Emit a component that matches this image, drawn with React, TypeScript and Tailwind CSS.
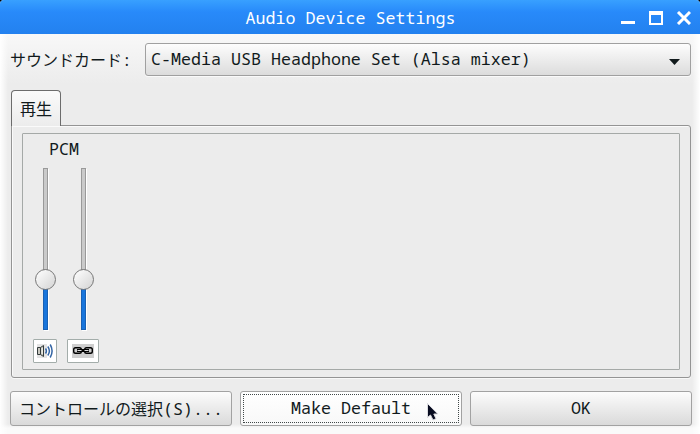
import type { ReactNode } from "react";

function TitleBar() {
  return (
    <header className="relative flex h-[34px] shrink-0 items-center justify-center bg-linear-to-b from-[#38a0ff] via-[#288afa] via-35% to-[#2381ef] pl-px text-white">
      <h1 className="mt-0.5 leading-5">Audio Device Settings</h1>
      <svg
        className="absolute top-[11px] right-[9px]"
        width="70"
        height="14"
        viewBox="0 0 70 14"
        fill="none"
        stroke="white"
      >
        <path d="M0 11.5h14" strokeWidth="3" />
        <path d="M29 1v12M41 1v12M28 13h14" strokeWidth="2" />
        <path d="M28 2h14" strokeWidth="4" />
        <path d="M57 1l12 12M69 1L57 13" strokeWidth="3" />
      </svg>
    </header>
  );
}

function SoundCardSelect() {
  return (
    <button className="flex h-[33px] w-[546px] items-center justify-between rounded-[3px] border border-[#a0a0a0] bg-linear-to-b from-[#fdfdfd] to-[#dcdcdc] pr-[10px] pl-[5px] shadow-[0_1px_0_#fafafa]">
      <span className="pb-0.5 whitespace-pre">C-Media USB Headphone Set (Alsa mixer)</span>
      <svg className="mt-1" width="11" height="6" viewBox="0 0 11 6">
        <path d="M0 0h11L5.5 6z" fill="#111a1c" />
      </svg>
    </button>
  );
}

function VolumeSlider() {
  return (
    <div className="relative flex h-[162px] w-5 justify-center">
      <div className="flex h-full w-[5px] flex-col shadow-[1px_1px_0_#fff]">
        <div className="h-[111px] border border-b-0 border-[#999] bg-[#cacaca]" />
        <div className="flex-1 border border-t-0 border-[#1860b4] bg-[#1875dc]" />
      </div>
      <div className="absolute top-[101px] left-0 size-[21px] rounded-full border border-[#777] bg-linear-to-br from-white to-[#d4d4d4]" />
    </div>
  );
}

function SpeakerIcon() {
  return (
    <svg width="16" height="14" viewBox="0 0 16 14" fill="none">
      <path d="M0 0h10v14H0z" fill="#e4e4e4" />
      <path d="M.5 3.5h3l3-2v11l-3-2h-3z" fill="#c8c8c0" stroke="#343c3c" />
      <path d="M3.5 3.5v7" stroke="#343c3c" />
      <path d="M5.2 4v6" stroke="#f8f8f0" />
      <path
        d="M8.5 4.5q1.8 2.5 0 5M10.8 2.5q3.2 4.5 0 9M13.2.5q3.8 6.5 0 13"
        stroke="#3465a4"
        strokeWidth="1.5"
      />
    </svg>
  );
}

function LinkIcon() {
  return (
    <svg width="22" height="14" viewBox="0 0 22 14" fill="none">
      <path d="M0 0h22v14H0z" fill="#cecece" />
      <rect x="1.7" y="3.7" width="7.6" height="5.6" rx="1.8" stroke="black" strokeWidth="1.4" />
      <rect x="12.7" y="3.7" width="7.6" height="5.6" rx="1.8" stroke="black" strokeWidth="1.4" />
      <path d="M5 6.5h12" stroke="black" strokeWidth="3" />
      <path d="M5.5 6.5h4M12.5 6.5h4" stroke="#ddd" />
    </svg>
  );
}

function ToggleButton({ width, children }: { width: string; children: ReactNode }) {
  return (
    <button
      className={`flex h-6 items-center justify-center rounded-[1px] border border-[#a3adaa] bg-white ${width}`}
    >
      {children}
    </button>
  );
}

function PlaybackTab() {
  return (
    <section>
      <div className="relative z-10 -mb-px flex h-9 w-[50px] items-center justify-center rounded-t-[4px] border border-b-0 border-[#6c6c6c] bg-linear-to-b from-[#fafafa] to-[#ececec] text-[16px]">
        再生
      </div>
      <div className="h-[253px] w-[680px] rounded-[3px] rounded-tl-none border border-[#949494] p-[7px_10px] shadow-[inset_1px_1px_0_#fafafa,0_1px_0_#f8f8f8]">
        <div className="h-[237px] rounded-[1px] border border-[#a5a9a7] pl-[10px]">
          <p className="w-[62px] pt-[5px] text-center leading-5">PCM</p>
          <div className="mt-[9px] ml-[2px] flex gap-[18px]">
            <VolumeSlider />
            <VolumeSlider />
          </div>
          <div className="mt-[9px] flex gap-[10px]">
            <ToggleButton width="w-6">
              <SpeakerIcon />
            </ToggleButton>
            <ToggleButton width="w-8">
              <LinkIcon />
            </ToggleButton>
          </div>
        </div>
      </div>
    </section>
  );
}

function Pointer() {
  return (
    <svg className="absolute top-[10px] left-[185px]" width="14" height="20" viewBox="0 0 14 20">
      <path
        d="M1.5 1.5v14l3-2.5 2.5 5 3-1.3L7.8 12h4z"
        fill="#080c20"
        stroke="#dcdce0"
        strokeWidth="1"
      />
    </svg>
  );
}

function DialogButton({ focused, children }: { focused?: boolean; children: ReactNode }) {
  return (
    <button
      className={`relative flex h-[35px] w-[222px] items-center justify-center rounded-[3px] border border-[#a2a2a2] bg-linear-to-b pb-0.5 whitespace-pre ${
        focused ? "from-white to-[#f8f8f8]" : "from-[#fcfcfc] to-[#dadada]"
      }`}
    >
      {focused && <span className="absolute inset-[2px] border border-dotted border-[#404848]" />}
      {children}
    </button>
  );
}

export default function App() {
  return (
    <div className="h-[434px] w-[700px] bg-black">
      <main className="flex h-full flex-col overflow-hidden rounded-t-[4px] bg-[#ececec] font-['Noto_Sans_Mono','Noto_Sans_Mono_CJK_JP','DejaVu_Sans_Mono','Noto_Sans_CJK_JP',monospace] text-[16.67px] text-[#111a1c]">
        <TitleBar />
        <div className="flex-1 bg-[linear-gradient(90deg,#fff,transparent_8px,transparent_692px,#fff),linear-gradient(180deg,#f8f8f8,#ececec_50px,#ececec_390px,#fafafa_394px)] pt-[9px]">
          <div className="flex items-center pl-[10px]">
            <span className="flex w-[135px] text-[16px]">
              サウンドカード<span>:</span>
            </span>
            <SoundCardSelect />
          </div>
          <div className="mt-[14px] pl-[11px]">
            <PlaybackTab />
          </div>
          <footer className="mt-[13px] flex gap-2 pl-[10px]">
            <DialogButton>
              <span className="pt-0.5 text-[16px]">コントロールの選択</span>
              <span className="pt-0.5">(S)...</span>
            </DialogButton>
            <DialogButton focused>
              Make Default
              <Pointer />
            </DialogButton>
            <DialogButton>OK</DialogButton>
          </footer>
        </div>
      </main>
    </div>
  );
}
